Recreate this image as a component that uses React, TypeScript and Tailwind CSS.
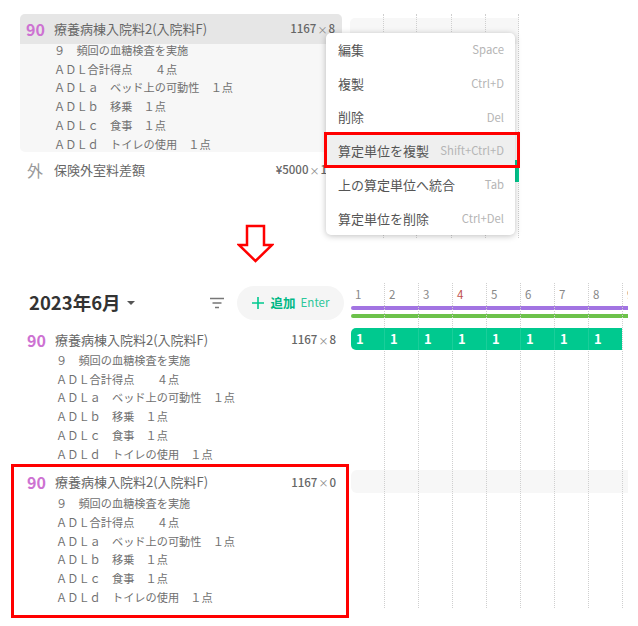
import React from 'react';

const days = [1, 2, 3, 4, 5, 6, 7, 8, 9];
const filled = [1, 2, 3, 4, 5, 6, 7, 8];

const detailLines = [
    '９　頻回の血糖検査を実施',
    'ＡＤＬ合計得点　　４点',
    'ＡＤＬａ　ベッド上の可動性　１点',
    'ＡＤＬｂ　移乗　１点',
    'ＡＤＬｃ　食事　１点',
    'ＡＤＬｄ　トイレの使用　１点',
];

const menuItems = [
    { label: '編集', key: 'Space' },
    { label: '複製', key: 'Ctrl+D' },
    { label: '削除', key: 'Del' },
    { label: '算定単位を複製', key: 'Shift+Ctrl+D', active: true },
    { label: '上の算定単位へ統合', key: 'Tab' },
    { label: '算定単位を削除', key: 'Ctrl+Del' },
];

function Details({ className }: { className: string }) {
    return (
        <div className={`text-[11.2px] leading-[18.7px] text-[#707070] ${className}`}>
            {detailLines.map((line) => (
                <div key={line}>{line}</div>
            ))}
        </div>
    );
}

function Title() {
    return (
        <div className="flex items-center">
            <span className="w-[28px] text-[16px] font-bold text-[#cd72d2]">90</span>
            <span className="text-[13px] text-[#666]">療養病棟入院料2(入院料F)</span>
        </div>
    );
}

function Price({ price, qty }: { price: string; qty: number }) {
    return (
        <span className="flex items-center text-[11.5px] font-medium text-[#666]">
            {price}
            <span className="mx-[1px] text-[10px] font-normal text-[#888]">×</span>
            {qty}
        </span>
    );
}

function ContextMenu() {
    return (
        <div className="absolute left-[326px] top-[33px] z-10 w-[189px] rounded-[5px] bg-white shadow-[0_1px_6px_rgba(0,0,0,0.25)]">
            {menuItems.map((item) => (
                <div
                    key={item.label}
                    className={`flex h-[33.7px] items-center justify-between pl-[12px] pr-[11px] ${item.active ? 'bg-[#efefef]' : ''}`}
                >
                    <span className="text-[13px] text-[#555]">{item.label}</span>
                    <span className="text-[11.3px] text-[#b5b5b5]">{item.key}</span>
                </div>
            ))}
        </div>
    );
}

function ReplaceArrow() {
    return (
        <svg width="37" height="39" viewBox="0 0 37 39" className="absolute left-[237px] top-[224px]">
            <path d="M10 2 H27 V21 H35 L18.5 37 L2 21 H10 Z" fill="#fff" stroke="#ff0000" strokeWidth="2.5" />
        </svg>
    );
}

function FilterIcon() {
    return (
        <svg width="16" height="12" viewBox="0 0 16 12" fill="none" stroke="#777" strokeWidth="1.5">
            <path d="M1 1.5 H15 M3.5 6 H12.5 M6 10.5 H10" />
        </svg>
    );
}

function PlusIcon() {
    return (
        <svg width="12" height="12" viewBox="0 0 12 12" fill="none" stroke="#00c98f" strokeWidth="1.6">
            <path d="M6 0 V12 M0 6 H12" />
        </svg>
    );
}

function Timeline() {
    return (
        <div className="relative h-[325px] w-[277px] overflow-hidden">
            <div className="flex h-[23px] w-[306px]">
                {days.map((d) => (
                    <div key={d} className={`w-[34px] shrink-0 pl-[4px] pt-[3px] text-[11.5px] ${d === 4 ? 'text-[#c0504d]' : 'text-[#888]'}`}>
                        {d}
                    </div>
                ))}
            </div>
            <div className="h-[4px] rounded-l-full bg-[#a274e2]" />
            <div className="mt-[4px] h-[4px] rounded-l-full bg-[#6cc24a]" />
            <div className="relative z-10 mt-[10px] flex h-[22px] w-[271px] items-center overflow-hidden rounded-l-[5px] bg-[#00c98f]">
                {filled.map((d) => (
                    <div key={d} className="flex h-full w-[34px] shrink-0 items-center border-r border-white/10 pl-[5px] text-[13px] font-bold text-white">
                        1
                    </div>
                ))}
            </div>
            <div className="mt-[120px] h-[23px] rounded-l-[6px] bg-[#f7f7f7]" />
            {/* day grid */}
            <div className="absolute inset-0 flex">
                {filled.map((d) => (
                    <div key={d} className="h-full w-[34px] shrink-0 border-r border-dotted border-[#cfcfcf]" />
                ))}
            </div>
        </div>
    );
}

export default function App() {
    return (
        <div className="relative h-[626px] w-[638px] overflow-hidden bg-white font-['Noto_Sans_CJK_JP',sans-serif]">
            {/* top shot */}
            <div className="flex h-[240px] pl-[20px] pt-[14px]">
                <div className="w-[322px]">
                    <div className="overflow-hidden rounded-[5px] bg-[#f7f7f7]">
                        <div className="flex h-[30px] items-center justify-between bg-[#e6e6e6] pl-[6px] pr-[7px]">
                            <Title />
                            <Price price="1167" qty={8} />
                        </div>
                        <div className="h-[111px]">
                            <Details className="-mt-[3px] pl-[34px]" />
                        </div>
                    </div>
                    <div className="flex h-[36px] items-center justify-between pl-[7px] pr-[15px]">
                        <div className="flex items-center">
                            <span className="w-[27px] text-[16px] text-[#999]">外</span>
                            <span className="text-[13px] text-[#666]">保険外室料差額</span>
                        </div>
                        <Price price="¥5000" qty={1} />
                    </div>
                </div>
                <div className="relative ml-[8px] grid h-[224px] w-[169px] grid-cols-[34px_33px_35px_34px_33px]">
                    <div className="absolute left-0 right-0 top-[4px] h-[26px] rounded-l-[5px] bg-[#f7f7f7]" />
                    {[1, 2, 3, 4, 5].map((d) => (
                        <div key={d} className="relative border-r border-dotted border-[#cfcfcf]" />
                    ))}
                </div>
            </div>
            <ContextMenu />
            <div className="absolute left-[515px] top-[160px] h-[22px] w-[4px] bg-[#00c98f]" />
            <div className="absolute left-[324px] top-[132px] z-20 h-[36px] w-[196px] border-[3px] border-[#ff0000]" />
            <ReplaceArrow />

            {/* bottom shot */}
            <div className="mt-[43px] flex">
                <div className="w-[351px]">
                    <div className="flex h-[40px] items-center pl-[29px]">
                        <span className="text-[18.5px] font-bold text-[#333]">2023年6月</span>
                        <span className="ml-[6px] h-0 w-0 border-x-[4px] border-t-[4px] border-x-transparent border-t-[#555]" />
                        <span className="ml-[74px]"><FilterIcon /></span>
                        <div className="ml-[12px] flex h-[34px] w-[107px] items-center rounded-full bg-[#f5f5f5] pl-[15px]">
                            <PlusIcon />
                            <span className="ml-[7px] text-[12.5px] font-bold text-[#00b885]">追加</span>
                            <span className="ml-[5px] text-[11.5px] text-[#2cc79a]">Enter</span>
                        </div>
                    </div>
                    <div className="mt-[3px] pl-[19px] pr-[15px]">
                        <div className="box-border flex h-[25px] items-center justify-between pl-[8px] pt-[3px]">
                            <Title />
                            <Price price="1167" qty={8} />
                        </div>
                        <Details className="pl-[37px]" />
                        <div className="mt-[6px] box-border flex h-[25px] items-center justify-between pl-[8px] pt-[1px]">
                            <Title />
                            <Price price="1167" qty={0} />
                        </div>
                        <Details className="pl-[37px]" />
                    </div>
                </div>
                <Timeline />
            </div>
            <div className="absolute left-[11px] top-[464px] z-20 h-[154px] w-[338px] border-[3px] border-[#ff0000]" />
        </div>
    );
}
